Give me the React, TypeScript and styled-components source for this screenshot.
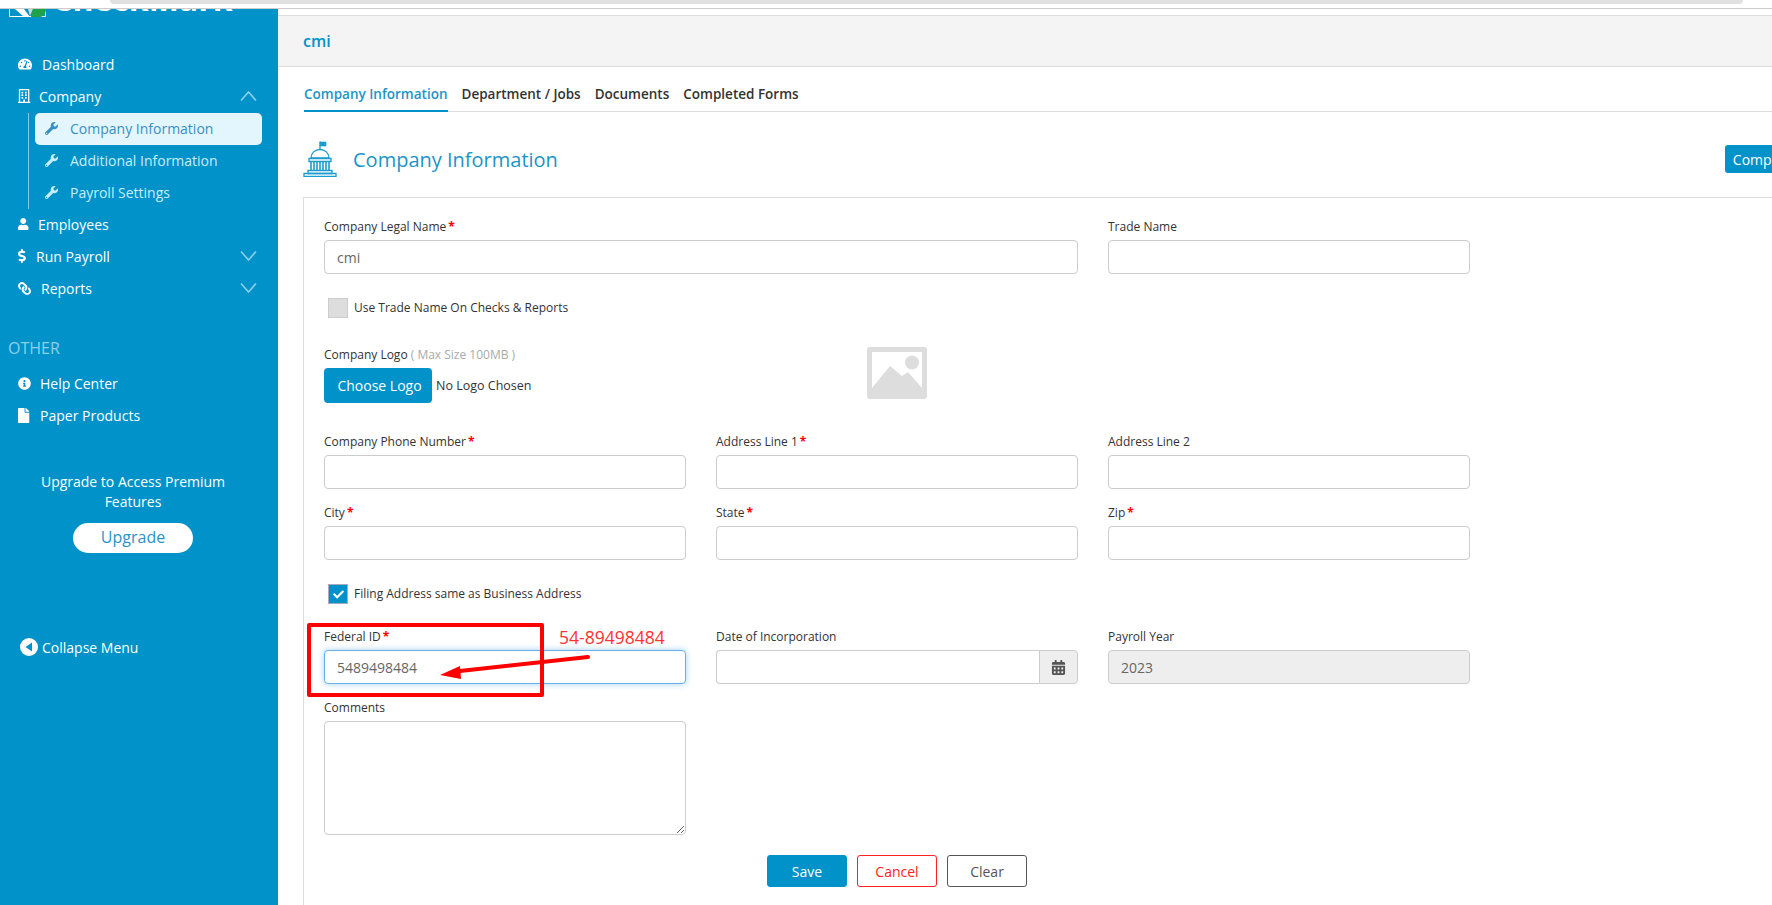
import React from 'react'
import styled, { createGlobalStyle } from 'styled-components'
import {
  FaCalendarAlt,
  FaCheck,
  FaDollarSign,
  FaFile,
  FaInfoCircle,
  FaLink,
  FaRegBuilding,
  FaTachometerAlt,
  FaUser,
  FaWrench,
} from 'react-icons/fa'

const BLUE = '#0092c8'
const LEFT_ALIGN = 'xMinYMid meet'

const GlobalStyle = createGlobalStyle`
  html, body {
    margin: 0;
    padding: 0;
    background: #fff;
    overflow: hidden;
  }
  * {
    box-sizing: border-box;
  }
  body {
    font-family: "Open Sans", "Noto Sans", sans-serif;
    font-size: 14px;
    color: #333;
  }
`

const Page = styled.div`
  position: relative;
  width: 1772px;
  height: 905px;
  overflow: hidden;
  display: flex;
  flex-direction: column;
`

const BrowserStrip = styled.div`
  height: 9px;
  flex-shrink: 0;
  border-bottom: 1px solid #ccc;
  padding: 0 29px 0 110px;
`

const StripPill = styled.div`
  height: 4px;
  background: #e0e0e0;
  border-radius: 0 0 8px 8px;
`

const Shell = styled.div`
  flex: 1;
  display: flex;
  min-height: 0;
`

/* sidebar */
const Sidebar = styled.aside`
  width: 278px;
  flex-shrink: 0;
  background: ${BLUE};
  color: #fff;
`

const Logo = styled.div`
  height: 8px;
  overflow: hidden;
  display: flex;
  align-items: flex-end;
  padding-left: 9px;
  gap: 6px;
  margin-bottom: 32px;
`

const LogoText = styled.span`
  font-size: 32px;
  line-height: 32px;
  padding-bottom: 2px;
  font-weight: 700;
  white-space: nowrap;
`

const NavRow = styled.div<{ $gap: number }>`
  height: 32px;
  display: flex;
  align-items: center;
  gap: ${(p) => p.$gap}px;
  padding: 0 21px 2px 18px;
  font-size: 14px;
  color: #fff;
  svg {
    flex-shrink: 0;
  }
`

const ReportsIcon = styled(FaLink)`
  transform: scaleX(-1);
`

const Chevron = styled.svg`
  margin-left: auto;
  width: 17px;
  height: 10px;
  fill: none;
  stroke: #8fd3ec;
  stroke-width: 1.5;
`

const SubList = styled.div`
  margin-left: 28px;
  width: 234px;
  padding-left: 6px;
  border-left: 1px solid rgba(255, 255, 255, 0.5);
`

const SubItem = styled.div<{ $active?: boolean }>`
  height: 32px;
  display: flex;
  align-items: center;
  gap: 12px;
  padding: 0 0 2px 10px;
  border-radius: 5px;
  background: ${(p) => (p.$active ? '#e3f6fd' : 'transparent')};
  color: ${(p) => (p.$active ? '#3a8fc4' : '#c8eefb')};
`

const SectionTitle = styled.div`
  margin-top: 32px;
  height: 22px;
  line-height: 22px;
  padding-left: 8px;
  font-size: 16px;
  color: #8fd0e8;
`

const OtherList = styled.div`
  margin-top: 9px;
`

const Promo = styled.div`
  margin-top: 40px;
  text-align: center;
  width: 266px;
  line-height: 20px;
  padding: 0 30px;
`

const UpgradeButton = styled.button`
  display: block;
  margin: 11px 0 0 73px;
  width: 120px;
  height: 30px;
  padding: 0 0 2px;
  border: 0;
  border-radius: 15px;
  background: #fff;
  color: #2a93c6;
  font: 16px "Open Sans", sans-serif;
`

const CollapseRow = styled.div`
  margin-top: 79px;
  height: 32px;
  display: flex;
  align-items: center;
  gap: 4px;
  padding: 0 0 2px 20px;
`

/* main column */
const Main = styled.main`
  flex: 1;
  min-width: 0;
  overflow: hidden;
  padding-top: 6px;
`

const CompanyBar = styled.div`
  height: 52px;
  background: #f4f4f4;
  border-top: 1px solid #ddd;
  border-bottom: 1px solid #ddd;
  display: flex;
  align-items: center;
  padding-left: 25px;
  color: ${BLUE};
  font-size: 16px;
  font-weight: 600;
`

const Tabs = styled.nav`
  margin-left: 26px;
  height: 45px;
  display: flex;
  gap: 14px;
  border-bottom: 1px solid #ddd;
`

const Tab = styled.a<{ $active?: boolean }>`
  display: flex;
  align-items: center;
  height: 45px;
  padding-top: 11px;
  font-size: 13.5px;
  font-weight: 600;
  color: ${(p) => (p.$active ? '#1d94c8' : '#333')};
  border-bottom: 2px solid ${(p) => (p.$active ? BLUE : 'transparent')};
`

const Heading = styled.div`
  height: 85px;
  margin-left: 25px;
  padding-top: 9px;
  display: flex;
  align-items: center;
  gap: 16px;
`

const Title = styled.h2`
  margin: 0;
  font-size: 20px;
  font-weight: 400;
  color: #1d94c8;
`

const CompleteButton = styled.button`
  margin-left: auto;
  margin-right: -31px;
  flex-shrink: 0;
  height: 28px;
  padding: 0 8px;
  border: 0;
  border-radius: 3px;
  background: ${BLUE};
  color: #fff;
  font: 14px "Open Sans", sans-serif;
`

const Card = styled.section`
  margin-left: 25px;
  width: 1600px;
  height: 800px;
  border: 1px solid #ddd;
  padding: 21px 20px;
`

const FormGrid = styled.div`
  width: 1146px;
  display: grid;
  grid-template-columns: repeat(3, 362px);
  column-gap: 30px;
`

const Field = styled.div<{ $span?: number; $top?: number }>`
  grid-column: span ${(p) => p.$span ?? 1};
  margin-top: ${(p) => p.$top ?? 0}px;
`

const Label = styled.label`
  display: block;
  height: 16px;
  line-height: 16px;
  margin-bottom: 5px;
  font-size: 12px;
  color: #333;
  white-space: nowrap;
`

const Req = styled.span`
  color: #f00;
  font-weight: 700;
  margin-left: 2px;
`

const Hint = styled.span`
  color: #aaa;
`

const TextInput = styled.input<{ $focus?: boolean }>`
  display: block;
  width: 100%;
  height: 34px;
  padding: 0 12px;
  border: 1px solid ${(p) => (p.$focus ? '#66afe9' : '#ccc')};
  border-radius: 4px;
  background: #fff;
  color: #666;
  font: 14px "Open Sans", sans-serif;
  outline: none;
  box-shadow: ${(p) => (p.$focus ? '0 0 6px rgba(102, 175, 233, 0.6)' : 'none')};
  &:disabled {
    background: #eee;
  }
`

const DateGroup = styled.div`
  display: flex;
  height: 34px;
  ${TextInput} {
    flex: 1;
    border-radius: 4px 0 0 4px;
    border-right: 0;
  }
`

const DateAddon = styled.span`
  width: 39px;
  display: flex;
  align-items: center;
  justify-content: center;
  border: 1px solid #ccc;
  border-radius: 0 4px 4px 0;
  background: #eee;
  color: #555;
`

const CommentsBox = styled.textarea`
  display: block;
  width: 100%;
  height: 114px;
  border: 1px solid #ccc;
  border-radius: 4px;
  outline: none;
  resize: vertical;
`

const CheckRow = styled.div<{ $top: number }>`
  grid-column: 1 / -1;
  margin-top: ${(p) => p.$top}px;
  padding-left: 4px;
  height: 20px;
  display: flex;
  align-items: center;
  gap: 6px;
  font-size: 12px;
  color: #333;
`

const CheckText = styled.span`
  padding-bottom: 2px;
`

const CheckBox = styled.span<{ $checked?: boolean }>`
  width: 20px;
  height: 20px;
  display: flex;
  align-items: center;
  justify-content: center;
  border: 1px solid ${(p) => (p.$checked ? '#aab' : '#ccc')};
  background: ${(p) => (p.$checked ? BLUE : '#ddd')};
  color: #fff;
`

const LogoRow = styled.div`
  display: flex;
  align-items: center;
  gap: 4px;
  font-size: 12.5px;
`

const ChooseButton = styled.button`
  width: 108px;
  height: 35px;
  padding: 0 0 0 3px;
  border: 0;
  border-radius: 4px;
  background: ${BLUE};
  color: #fff;
  font: 14px "Open Sans", sans-serif;
`

const ImagePreview = styled.svg`
  display: block;
  justify-self: center;
  margin-top: 29px;
  width: 60px;
  height: 52px;
`

const Actions = styled.div`
  grid-column: 1 / -1;
  margin-top: 20px;
  display: flex;
  justify-content: center;
  gap: 10px;
`

const ActionButton = styled.button<{ $tone: 'save' | 'cancel' | 'clear' }>`
  width: 80px;
  height: 32px;
  border-radius: 3px;
  font: 14px "Open Sans", sans-serif;
  border: 1px solid ${(p) => ({ save: BLUE, cancel: '#f22', clear: '#555' })[p.$tone]};
  background: ${(p) => (p.$tone === 'save' ? BLUE : '#fff')};
  color: ${(p) => ({ save: '#fff', cancel: '#f22', clear: '#555' })[p.$tone]};
`

/* screenshot annotation drawn on top of the page */
const RedBox = styled.div`
  position: absolute;
  left: 307px;
  top: 623px;
  width: 237px;
  height: 74px;
  border: 4px solid #f00;
  border-radius: 2px;
`

const RedNote = styled.div`
  position: absolute;
  left: 559px;
  top: 625px;
  line-height: 24px;
  font-size: 17.5px;
  color: #f33;
`

const RedArrow = styled.svg`
  position: absolute;
  left: 430px;
  top: 650px;
`

const Capitol = () => (
  <svg width="34" height="36" viewBox="0 0 34 36" fill="none" stroke="#1d9ccf" strokeWidth="1.3">
    <path d="M17 9V.5" />
    <path d="M17 1h6v4h-6z" fill="#1d9ccf" strokeWidth="0.6" />
    <path d="M8 17c0-5 4-8.500 9-8.500s9 3.500 9 8.500z" />
    <path d="M6 17.500h22v3H6z" />
    <path d="M8 21v8M26 21v8M11 21v8M14 21v8M17 21v8M20 21v8M23 21v8" strokeWidth="1.6" />
    <path d="M5 29.500h24v3H5z" />
    <path d="M1 32.500h32v3H1z" />
  </svg>
)

const PlaceholderImage = () => (
  <ImagePreview viewBox="0 0 60 52">
    <rect width="60" height="52" rx="3" fill="#ddd" />
    <rect x="5" y="5" width="50" height="42" fill="#fff" />
    <circle cx="45" cy="15.500" r="7" fill="#ddd" />
    <path d="M5 41 23 19l12 10 6-4 14 16v6H5z" fill="#ddd" />
  </ImagePreview>
)

const LogoMark = () => (
  <svg width="37" height="8" viewBox="0 0 37 8">
    <path d="M.5 0v7.500h36V0" fill="none" stroke="#fff" />
    <path d="M6 0h9l6 8h-6z" fill="#fff" />
    <path d="M19 0h5l-3 7z" fill="#cfd8d0" />
    <path d="M24 0h13c0 4-2 8-6 8h-9z" fill="#1fa34a" />
  </svg>
)

const Collapse = () => (
  <svg width="18" height="18" viewBox="0 0 18 18">
    <circle cx="9" cy="9" r="9" fill="#fff" />
    <path d="M12 4.500v9L5.500 9z" fill={BLUE} />
  </svg>
)

const ChevronIcon = ({ up }: { up?: boolean }) => (
  <Chevron viewBox="0 0 17 10">
    <polyline points={up ? '1,9.5 8.5,1 16,9.5' : '1,.5 8.5,9 16,.5'} />
  </Chevron>
)

const subItems = ['Company Information', 'Additional Information', 'Payroll Settings']
const tabs = ['Company Information', 'Department / Jobs', 'Documents', 'Completed Forms']

export default function App() {
  return (
    <Page>
      <GlobalStyle />
      <BrowserStrip>
        <StripPill />
      </BrowserStrip>
      <Shell>
        <Sidebar>
          <Logo>
            <LogoMark />
            <LogoText>CheckMark</LogoText>
          </Logo>
          <NavRow $gap={10}>
            <FaTachometerAlt size={14} />
            Dashboard
          </NavRow>
          <NavRow $gap={7}>
            <FaRegBuilding size={14} preserveAspectRatio={LEFT_ALIGN} />
            Company
            <ChevronIcon up />
          </NavRow>
          <SubList>
            {subItems.map((item, i) => (
              <SubItem key={item} $active={i === 0}>
                <FaWrench size={13} />
                {item}
              </SubItem>
            ))}
          </SubList>
          <NavRow $gap={8}>
            <FaUser size={12} preserveAspectRatio={LEFT_ALIGN} />
            Employees
          </NavRow>
          <NavRow $gap={4}>
            <FaDollarSign size={14} preserveAspectRatio={LEFT_ALIGN} />
            Run Payroll
            <ChevronIcon />
          </NavRow>
          <NavRow $gap={10}>
            <ReportsIcon size={13} />
            Reports
            <ChevronIcon />
          </NavRow>

          <SectionTitle>OTHER</SectionTitle>
          <OtherList>
            <NavRow $gap={9}>
              <FaInfoCircle size={13} />
              Help Center
            </NavRow>
            <NavRow $gap={7}>
              <FaFile size={15} preserveAspectRatio={LEFT_ALIGN} />
              Paper Products
            </NavRow>
          </OtherList>

          <Promo>Upgrade to Access Premium Features</Promo>
          <UpgradeButton>Upgrade</UpgradeButton>

          <CollapseRow>
            <Collapse />
            Collapse Menu
          </CollapseRow>
        </Sidebar>

        <Main>
          <CompanyBar>cmi</CompanyBar>
          <Tabs>
            {tabs.map((tab, i) => (
              <Tab key={tab} $active={i === 0}>
                {tab}
              </Tab>
            ))}
          </Tabs>
          <Heading>
            <Capitol />
            <Title>Company Information</Title>
            <CompleteButton>Company</CompleteButton>
          </Heading>

          <Card>
            <FormGrid>
              <Field $span={2}>
                <Label>
                  Company Legal Name<Req>*</Req>
                </Label>
                <TextInput readOnly value="cmi" />
              </Field>
              <Field>
                <Label>Trade Name</Label>
                <TextInput readOnly />
              </Field>

              <CheckRow $top={24}>
                <CheckBox />
                <CheckText>Use Trade Name On Checks &amp; Reports</CheckText>
              </CheckRow>

              <Field $top={29}>
                <Label>
                  Company Logo <Hint>( Max Size 100MB )</Hint>
                </Label>
                <LogoRow>
                  <ChooseButton>Choose Logo</ChooseButton>
                  No Logo Chosen
                </LogoRow>
              </Field>
              <PlaceholderImage />
              <div />

              <Field $top={31}>
                <Label>
                  Company Phone Number<Req>*</Req>
                </Label>
                <TextInput readOnly />
              </Field>
              <Field $top={31}>
                <Label>
                  Address Line 1<Req>*</Req>
                </Label>
                <TextInput readOnly />
              </Field>
              <Field $top={31}>
                <Label>Address Line 2</Label>
                <TextInput readOnly />
              </Field>

              <Field $top={16}>
                <Label>
                  City<Req>*</Req>
                </Label>
                <TextInput readOnly />
              </Field>
              <Field $top={16}>
                <Label>
                  State<Req>*</Req>
                </Label>
                <TextInput readOnly />
              </Field>
              <Field $top={16}>
                <Label>
                  Zip<Req>*</Req>
                </Label>
                <TextInput readOnly />
              </Field>

              <CheckRow $top={24}>
                <CheckBox $checked>
                  <FaCheck size={11} />
                </CheckBox>
                <CheckText>Filing Address same as Business Address</CheckText>
              </CheckRow>

              <Field $top={25}>
                <Label>
                  Federal ID<Req>*</Req>
                </Label>
                <TextInput readOnly $focus value="5489498484" />
              </Field>
              <Field $top={25}>
                <Label>Date of Incorporation</Label>
                <DateGroup>
                  <TextInput readOnly />
                  <DateAddon>
                    <FaCalendarAlt size={15} />
                  </DateAddon>
                </DateGroup>
              </Field>
              <Field $top={25}>
                <Label>Payroll Year</Label>
                <TextInput disabled value="2023" />
              </Field>

              <Field $top={16}>
                <Label>Comments</Label>
                <CommentsBox readOnly />
              </Field>

              <Actions>
                <ActionButton $tone="save">Save</ActionButton>
                <ActionButton $tone="cancel">Cancel</ActionButton>
                <ActionButton $tone="clear">Clear</ActionButton>
              </Actions>
            </FormGrid>
          </Card>
        </Main>
      </Shell>

      <RedBox />
      <RedNote>54-89498484</RedNote>
      <RedArrow width="170" height="40" viewBox="0 0 170 40">
        <path d="M158 7 L30 21" stroke="#f00" strokeWidth="4" strokeLinecap="round" />
        <path d="M10 25 L30 16 L31 29 z" fill="#f00" />
      </RedArrow>
    </Page>
  )
}
